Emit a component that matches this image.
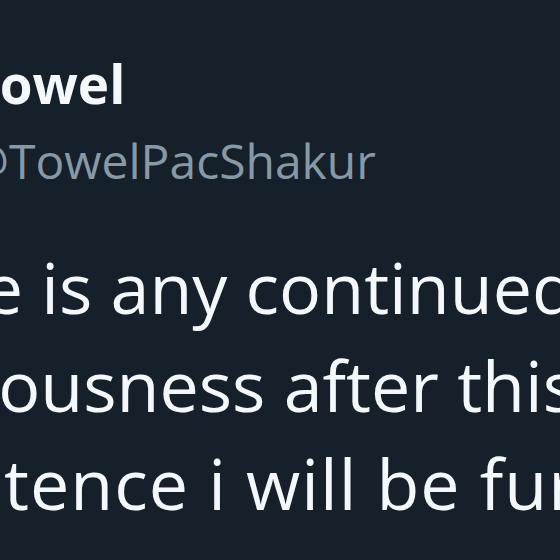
export default function App() {
  const font = { fontFamily: '"Open Sans", "Noto Sans", Arial, sans-serif' }

  return (
    <div className="w-[560px] h-[560px] overflow-hidden bg-[#15202b]" style={font}>
      <div className="pt-[54px]">
        <div className="ml-[-31px] whitespace-nowrap text-[53px] leading-[60px] font-bold text-[#f5f8fa]">
          Towel
        </div>
        <div className="mt-[17px] ml-[-34px] whitespace-nowrap text-[48px] leading-[60px] text-[#8899a6]">
          @TowelPacShakur
        </div>
      </div>

      <div className="mt-[47px] text-[70px] leading-[98px] font-medium text-[#f5f8fa]">
        <div className="ml-[-152px] whitespace-nowrap">there is any continued</div>
        <div className="ml-[-205px] whitespace-nowrap">consciousness after this</div>
        <div className="ml-[-127px] whitespace-nowrap tracking-[1px]">existence i will be furious</div>
      </div>
    </div>
  )
}
